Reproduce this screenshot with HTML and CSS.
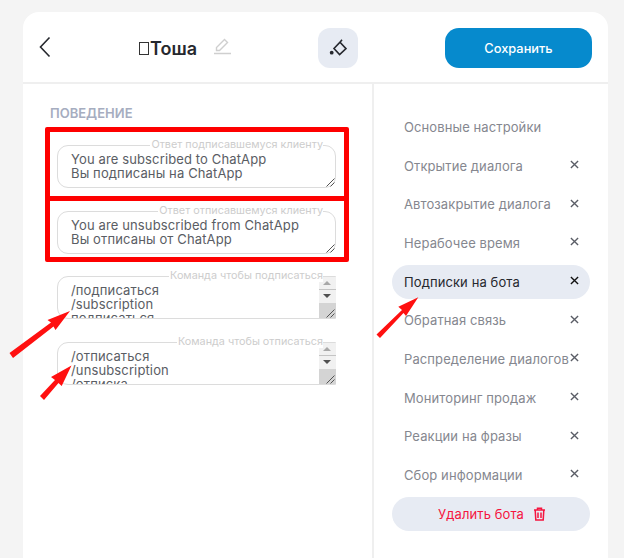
FILE: index.html
```html
<!DOCTYPE html>
<html lang="ru">
<head>
  <meta charset="UTF-8">
  <title>Подписки на бота</title>
  <link rel="stylesheet" href="styles.css">
</head>
<body>
  <svg class="defs" width="0" height="0">
    <symbol id="close" viewBox="0 0 10 10"><path d="M1 1l8 8M9 1 1 9" fill="none" stroke="currentColor" stroke-width="1.500"/></symbol>
    <symbol id="grip" viewBox="0 0 9 9"><path d="M.5 8.500l8-8M4.500 8.500l4-4" stroke="#555" fill="none"/></symbol>
  </svg>
  <div class="card">
    <header class="top">
      <svg class="back" width="12" height="22" viewBox="0 0 12 22"><path d="M10.500 1.500 1.500 11l9 9.500" fill="none" stroke="#26282e" stroke-width="1.600"/></svg>
      <div class="title">
        <span class="tofu"></span><span class="name">Тоша</span>
        <svg class="pencil" width="18" height="18" viewBox="0 0 18 18"><path d="M1 16.500h17M3.500 13.500v-3l8-8 3 3-8 8z" fill="none" stroke="#cfcfcf" stroke-width="1.400"/></svg>
      </div>
      <button class="fill-btn">
        <svg width="18" height="18" viewBox="0 0 18 18"><path d="M13 .8 11 3.200M11 3.200l6 6.400-6.400 5.900L5 9.500z" fill="none" stroke="#26282e" stroke-width="1.600"/><circle cx="2.700" cy="13.700" r="1.900" fill="#26282e"/></svg>
      </button>
      <button class="save">Сохранить</button>
    </header>
    <div class="columns">
      <main class="form">
        <h3>ПОВЕДЕНИЕ</h3>
        <div class="field">
          <span class="legend">Ответ подписавшемуся клиенту</span>
          <div class="area">You are subscribed to ChatApp<br>Вы подписаны на ChatApp</div>
          <svg class="grip" width="9" height="9"><use href="#grip"/></svg>
        </div>
        <div class="field">
          <span class="legend">Ответ отписавшемуся клиенту</span>
          <div class="area">You are unsubscribed from ChatApp<br>Вы отписаны от ChatApp</div>
          <svg class="grip" width="9" height="9"><use href="#grip"/></svg>
        </div>
        <div class="field scroll">
          <span class="legend">Команда чтобы подписаться</span>
          <div class="area">/подписаться<br>/subscription<br>подписаться</div>
          <div class="bar"><i class="up"></i><i class="down"></i></div>
          <svg class="grip" width="9" height="9"><use href="#grip"/></svg>
        </div>
        <div class="field scroll">
          <span class="legend">Команда чтобы отписаться</span>
          <div class="area">/отписаться<br>/unsubscription<br>/отписка</div>
          <div class="bar"><i class="up"></i><i class="down"></i></div>
          <svg class="grip" width="9" height="9"><use href="#grip"/></svg>
        </div>
      </main>
      <nav class="side">
        <div class="item"><span>Основные настройки</span></div>
        <div class="item"><span>Открытие диалога</span><svg class="x"><use href="#close"/></svg></div>
        <div class="item"><span>Автозакрытие диалога</span><svg class="x"><use href="#close"/></svg></div>
        <div class="item"><span>Нерабочее время</span><svg class="x"><use href="#close"/></svg></div>
        <div class="item active"><span>Подписки на бота</span><svg class="x"><use href="#close"/></svg></div>
        <div class="item"><span>Обратная связь</span><svg class="x"><use href="#close"/></svg></div>
        <div class="item"><span>Распределение диалогов</span><svg class="x"><use href="#close"/></svg></div>
        <div class="item"><span>Мониторинг продаж</span><svg class="x"><use href="#close"/></svg></div>
        <div class="item"><span>Реакции на фразы</span><svg class="x"><use href="#close"/></svg></div>
        <div class="item"><span>Сбор информации</span><svg class="x"><use href="#close"/></svg></div>
        <button class="remove">Удалить бота
          <svg width="13" height="14" viewBox="0 0 13 14"><path d="M1 3h11M4.500 3V1.200h4V3M2.200 3l.6 10h7.400l.6-10M5 5.500v5.500M8 5.500v5.500" fill="none" stroke="#f5153f" stroke-width="1.500"/></svg>
        </button>
      </nav>
    </div>
  </div>

  <div class="mark mark-a"></div>
  <div class="mark mark-b"></div>
  <svg class="arrows" width="624" height="558" viewBox="0 0 624 558">
    <g fill="#ff1010">
      <path d="M9.500 353 51 322.500 47.500 320 70 311 55.500 330 53.500 326.500 13 358z"/>
      <path d="M40 396 55 380 51 377 71.500 365.500 61.700 386 58.500 383 44 400z"/>
      <path d="M376.500 334.500 402 310 398.300 306.700 418.300 297.300 406 316 403.500 313 380 338z"/>
    </g>
  </svg>
</body>
</html>
```
FILE: styles.css
```css
body {
  margin: 0;
  height: 558px;
  overflow: hidden;
  background: #f4f4f4;
  font-family: 'Inter', sans-serif;
  padding: 12px 16px 0 23px;
  box-sizing: border-box;
}
.defs {
  position: absolute;
}
.card {
  background: white;
  border-radius: 16px 16px 0 0;
  height: 546px;
}
.top {
  height: 72px;
  box-sizing: border-box;
  border-bottom: 2px solid #efefef;
  display: flex;
  align-items: center;
  padding: 2px 16px 0 16px;
}
.back {
  margin-top: -2px;
}
.title {
  display: flex;
  align-items: center;
  margin-left: 88px;
  width: 179px;
  color: #26282e;
  font-size: 18px;
  font-weight: 600;
}
.tofu {
  width: 8px;
  height: 11px;
  border: 1px solid #333;
  margin-right: 1px;
}
.pencil {
  margin-left: 16px;
  margin-top: -4px;
}
.fill-btn {
  width: 40px;
  height: 40px;
  border: none;
  border-radius: 12px;
  background: #e7ebf3;
  display: flex;
  align-items: center;
  justify-content: center;
  padding: 0;
}
.save {
  width: 147px;
  height: 40px;
  margin-left: auto;
  border: none;
  border-radius: 14px;
  background: #068acd;
  color: white;
  font-family: inherit;
  font-size: 12.8px;
  font-weight: 500;
}
.columns {
  display: flex;
  height: 474px;
}
.form {
  width: 316px;
  border-right: 2px solid #efefef;
  padding: 21px 0 0 34px;
}
h3 {
  margin: 0 0 24px -7px;
  color: #a6adc0;
  font-size: 13px;
  line-height: 16px;
  font-weight: 600;
}
.field {
  position: relative;
  width: 279px;
  height: 43px;
  margin-bottom: 22.67px;
}
.legend {
  position: absolute;
  right: 13px;
  top: -7px;
  background: white;
  padding-left: 1px;
  color: #cdcdcd;
  font-size: 10.8px;
  line-height: 13px;
  z-index: 1;
}
.area {
  height: 43px;
  box-sizing: border-box;
  overflow: hidden;
  border: 1px solid #dcdcdc;
  border-radius: 11px;
  padding: 6px 13px 0;
  color: #5a5d64;
  font-size: 13px;
  letter-spacing: 0.13px;
  line-height: 14px;
}
.grip {
  position: absolute;
  right: 1px;
  bottom: 1px;
}
.scroll .area {
  border-radius: 11px 0 0 11px;
}
.bar {
  position: absolute;
  right: 0;
  top: 1px;
  bottom: 1px;
  width: 17px;
  background: #d4d4d4;
  display: flex;
  flex-direction: column;
}
.bar i {
  height: 13px;
  background: #f1f1f1;
  position: relative;
}
.bar .up {
  height: 12px;
  border-bottom: 1px solid #c4c4c4;
}
.bar .up::after,
.bar .down::after {
  content: "";
  position: absolute;
  left: 4px;
  top: 4px;
  border: 4.5px solid transparent;
  border-top: 0;
  border-bottom: 4px solid #a8a8a8;
}
.bar .down::after {
  border-bottom: 0;
  border-top: 4px solid #505050;
}
.side {
  flex: 1;
  padding: 26px 18px 0 18px;
}
.item {
  display: flex;
  align-items: center;
  justify-content: space-between;
  height: 34px;
  margin-bottom: 4.67px;
  padding: 0 11px 0 12px;
  border-radius: 17px;
  color: #85878f;
  font-size: 13px;
  letter-spacing: 0.1px;
}
.item span {
  white-space: nowrap;
}
.x {
  width: 9px;
  height: 9px;
  flex: none;
  margin-top: -2px;
  color: #5a5d66;
}
.item.active {
  background: #e7ebf3;
  color: #26282e;
}
.item.active .x {
  color: #111;
}
.remove {
  display: flex;
  align-items: center;
  justify-content: center;
  gap: 9px;
  width: 198px;
  height: 34px;
  padding: 0 0 0 2px;
  border: none;
  border-radius: 17px;
  background: #e7ebf3;
  color: #f5153f;
  font-family: inherit;
  font-size: 13px;
  letter-spacing: 0.1px;
}
.mark {
  position: absolute;
  left: 45px;
  width: 304px;
  box-sizing: border-box;
  border: 5px solid #fe0000;
  border-radius: 2px;
}
.mark-a {
  top: 127px;
  height: 74px;
}
.mark-b {
  top: 196px;
  height: 66px;
}
.arrows {
  position: absolute;
  left: 0;
  top: 0;
}
```
